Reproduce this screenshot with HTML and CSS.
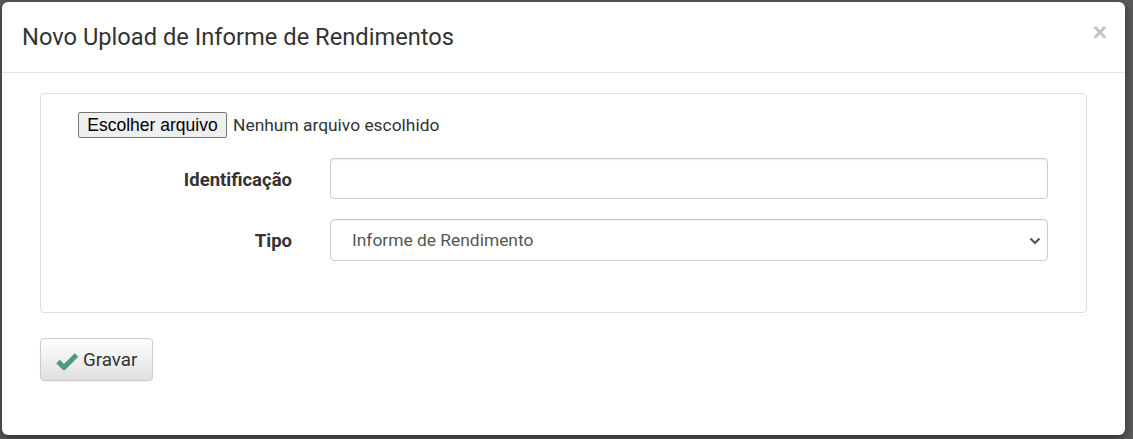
FILE: index.html
```html
<!DOCTYPE html>
<html lang="pt-BR">
<head>
<meta charset="utf-8">
<title>Novo Upload de Informe de Rendimentos</title>
<link rel="stylesheet" href="styles.css">
</head>
<body>
<div class="modal">
  <div class="modal-header">
    <h4 class="modal-title">Novo Upload de Informe de Rendimentos</h4>
    <button class="close" type="button" aria-label="Fechar">&times;</button>
  </div>
  <div class="modal-body">
    <div class="panel">
      <div class="file-row">
        <span class="file-btn">Escolher arquivo</span>
        <span class="file-name">Nenhum arquivo escolhido</span>
      </div>
      <div class="form-grid">
        <label class="form-label">Identificação</label>
        <div class="form-control"></div>
        <label class="form-label">Tipo</label>
        <div class="form-control select">
          <span>Informe de Rendimento</span>
          <svg class="chevron" width="12" height="8" viewBox="0 0 12 8"><path d="M1.5 1.5 L6 6 L10.5 1.5" fill="none" stroke="#555" stroke-width="2.2"/></svg>
        </div>
      </div>
    </div>
    <button class="btn" type="button">
      <svg class="check" width="22" height="18" viewBox="0 0 22 18"><path d="M2 9.5 L8 15.5 L20.5 3" fill="none" stroke="#4b9a82" stroke-width="5" stroke-linejoin="miter"/></svg>
      <span>Gravar</span>
    </button>
  </div>
</div>
</body>
</html>
```

FILE: styles.css
```css
html, body {
  margin: 0;
  padding: 0;
  height: 100%;
}
body {
  background: #5a5a5a;
  font-family: Roboto, "Liberation Sans", Arial, sans-serif;
  color: #333;
  padding: 2px 8px 4px 2px;
  box-sizing: border-box;
}
.modal {
  background: #fff;
  border-radius: 6px;
  height: 433px;
  box-shadow: 0 3px 9px rgba(0,0,0,.5);
  display: flex;
  flex-direction: column;
}
.modal-header {
  height: 70px;
  border-bottom: 1px solid #e5e5e5;
  display: flex;
  align-items: center;
  justify-content: space-between;
  padding: 0 18px 0 20px;
}
.modal-title {
  margin: 0;
  font-size: 23.7px;
  font-weight: 400;
  color: #333;
  padding-bottom: 1px;
}
.close {
  border: 0;
  background: none;
  font-family: "Liberation Sans", Arial, sans-serif;
  font-size: 25px;
  font-weight: 700;
  color: #c4c4c4;
  padding: 0;
  margin-bottom: 10px;
  line-height: 1;
}
.modal-body {
  padding: 20px 38px 0 38px;
}
.panel {
  border: 1px solid #ddd;
  border-radius: 4px;
  height: 220px;
  box-sizing: border-box;
  padding: 18px 38px 0 37px;
}
.file-row {
  display: flex;
  align-items: center;
  gap: 6px;
  height: 26px;
}
.file-btn {
  font-family: "Liberation Sans", Arial, sans-serif;
  font-size: 17.5px;
  color: #000;
  background: #efefef;
  border: 1px solid #767676;
  border-radius: 2px;
  height: 24px;
  width: 147px;
  display: flex;
  align-items: center;
  justify-content: center;
  box-sizing: content-box;
}
.file-name {
  font-size: 17.4px;
  color: #333;
}
.form-grid {
  display: grid;
  grid-template-columns: 214px 1fr;
  column-gap: 38px;
  row-gap: 20px;
  margin-top: 20px;
  align-items: center;
}
.form-label {
  text-align: right;
  font-weight: 700;
  font-size: 18.5px;
  color: #333;
  padding-top: 2px;
}
.form-control {
  height: 39px;
  border: 1px solid #ccc;
  border-radius: 4px;
  box-shadow: inset 0 1px 1px rgba(0,0,0,.075);
}
.form-control.select {
  height: 40px;
  display: flex;
  align-items: center;
  justify-content: space-between;
  padding: 0 6px 0 21px;
  font-size: 17.4px;
  color: #555;
}
.chevron {
  margin-top: 1px;
}
.btn {
  margin-top: 25px;
  width: 113px;
  height: 43px;
  border: 1px solid #ccc;
  border-radius: 4px;
  background: linear-gradient(#fff, #e0e0e0);
  display: flex;
  align-items: center;
  gap: 5px;
  padding: 0 0 0 15px;
  font-family: Roboto, "Liberation Sans", Arial, sans-serif;
  font-size: 18.8px;
  color: #333;
  box-shadow: 0 1px 1px rgba(0,0,0,.05);
}
.check {
  margin-top: 2px;
}
```
